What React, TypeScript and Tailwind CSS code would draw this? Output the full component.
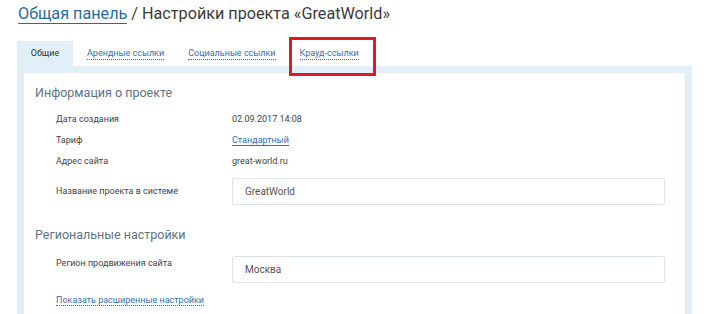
import React from 'react';

const tabs = ['Общие', 'Арендные ссылки', 'Социальные ссылки', 'Крауд-ссылки'];

const InfoRow: React.FC<{ label: string; children: React.ReactNode }> = ({ label, children }) => (
  <div className="flex h-[21px] items-center">
    <div className="w-[176px] shrink-0 text-[9px] text-[#444]">{label}</div>
    <div className="text-[9px] text-[#444]">{children}</div>
  </div>
);

const App: React.FC = () => {
  return (
    <div className="h-[314px] w-[725px] overflow-hidden bg-white font-['Roboto',sans-serif]">
      <div className="pl-[18px] pt-[3px]">
        <h1 className="text-[16.2px] leading-[22px] text-[#3a3a3a]">
          <a className="text-[#2c6a9e] border-b border-[#2c6a9e]">Общая панель</a> / Настройки проекта «GreatWorld»
        </h1>
      </div>

      {/* tabs */}
      <div className="relative mt-[16px] flex h-[25px] pl-[17px]">
        {tabs.map((t, i) =>
          i === 0 ? (
            <div key={t} className="mr-[2px] flex h-full w-[56px] items-center justify-center bg-[#e1f0f8] text-[9px] text-[#333]">
              {t}
            </div>
          ) : (
            <div key={t} className="flex h-full items-center px-[12px]">
              <span className="border-b border-dotted border-[#3b6ea5] text-[9px] leading-[11px] text-[#3b6ea5]">{t}</span>
            </div>
          )
        )}
        {/* annotation box */}
        <div className="absolute left-[289px] top-[-4px] h-[39px] w-[87px] border-[3px] border-[#e01a22]" />
      </div>

      {/* frame */}
      <div className="ml-[17px] w-[675px] border-x-[7px] border-t-[7px] border-[#e1f0f8] pb-4">
        <div className="pl-[11px] pr-[20px]">
          <h2 className="pt-[10px] text-[12.5px] leading-[20px] text-[#5e7384]">Информация о проекте</h2>
          <div className="mt-[6px] pl-[21px]">
            <InfoRow label="Дата создания">02.09.2017 14:08</InfoRow>
            <InfoRow label="Тариф">
              <a className="border-b border-[#3b6ea5] text-[#3b6ea5]">Стандартный</a>
            </InfoRow>
            <InfoRow label="Адрес сайта">great-world.ru</InfoRow>
            <div className="mt-[6px] flex items-center">
              <div className="w-[176px] shrink-0 text-[9px] text-[#444]">Название проекта в системе</div>
              <div className="flex h-[27px] flex-1 items-center rounded-[2px] border border-[#dde3e6] px-[12px] text-[10px] text-[#555]">
                GreatWorld
              </div>
            </div>
          </div>

          <h2 className="mt-[20px] text-[12.5px] leading-[20px] text-[#5e7384]">Региональные настройки</h2>
          <div className="mt-[11px] pl-[21px]">
            <div className="flex items-start">
              <div className="w-[176px] shrink-0 pt-[1px] text-[9px] leading-[12px] text-[#444]">Регион продвижения сайта</div>
              <div className="flex h-[27px] flex-1 items-center rounded-[2px] border border-[#dde3e6] px-[12px] text-[10px] text-[#555]">
                Москва
              </div>
            </div>
            <div className="mt-[3px]">
              <span className="border-b border-dotted border-[#3b6ea5] text-[9px] leading-[11px] text-[#3b6ea5]">
                Показать расширенные настройки
              </span>
            </div>
          </div>
        </div>
      </div>
    </div>
  );
};

export default App;
